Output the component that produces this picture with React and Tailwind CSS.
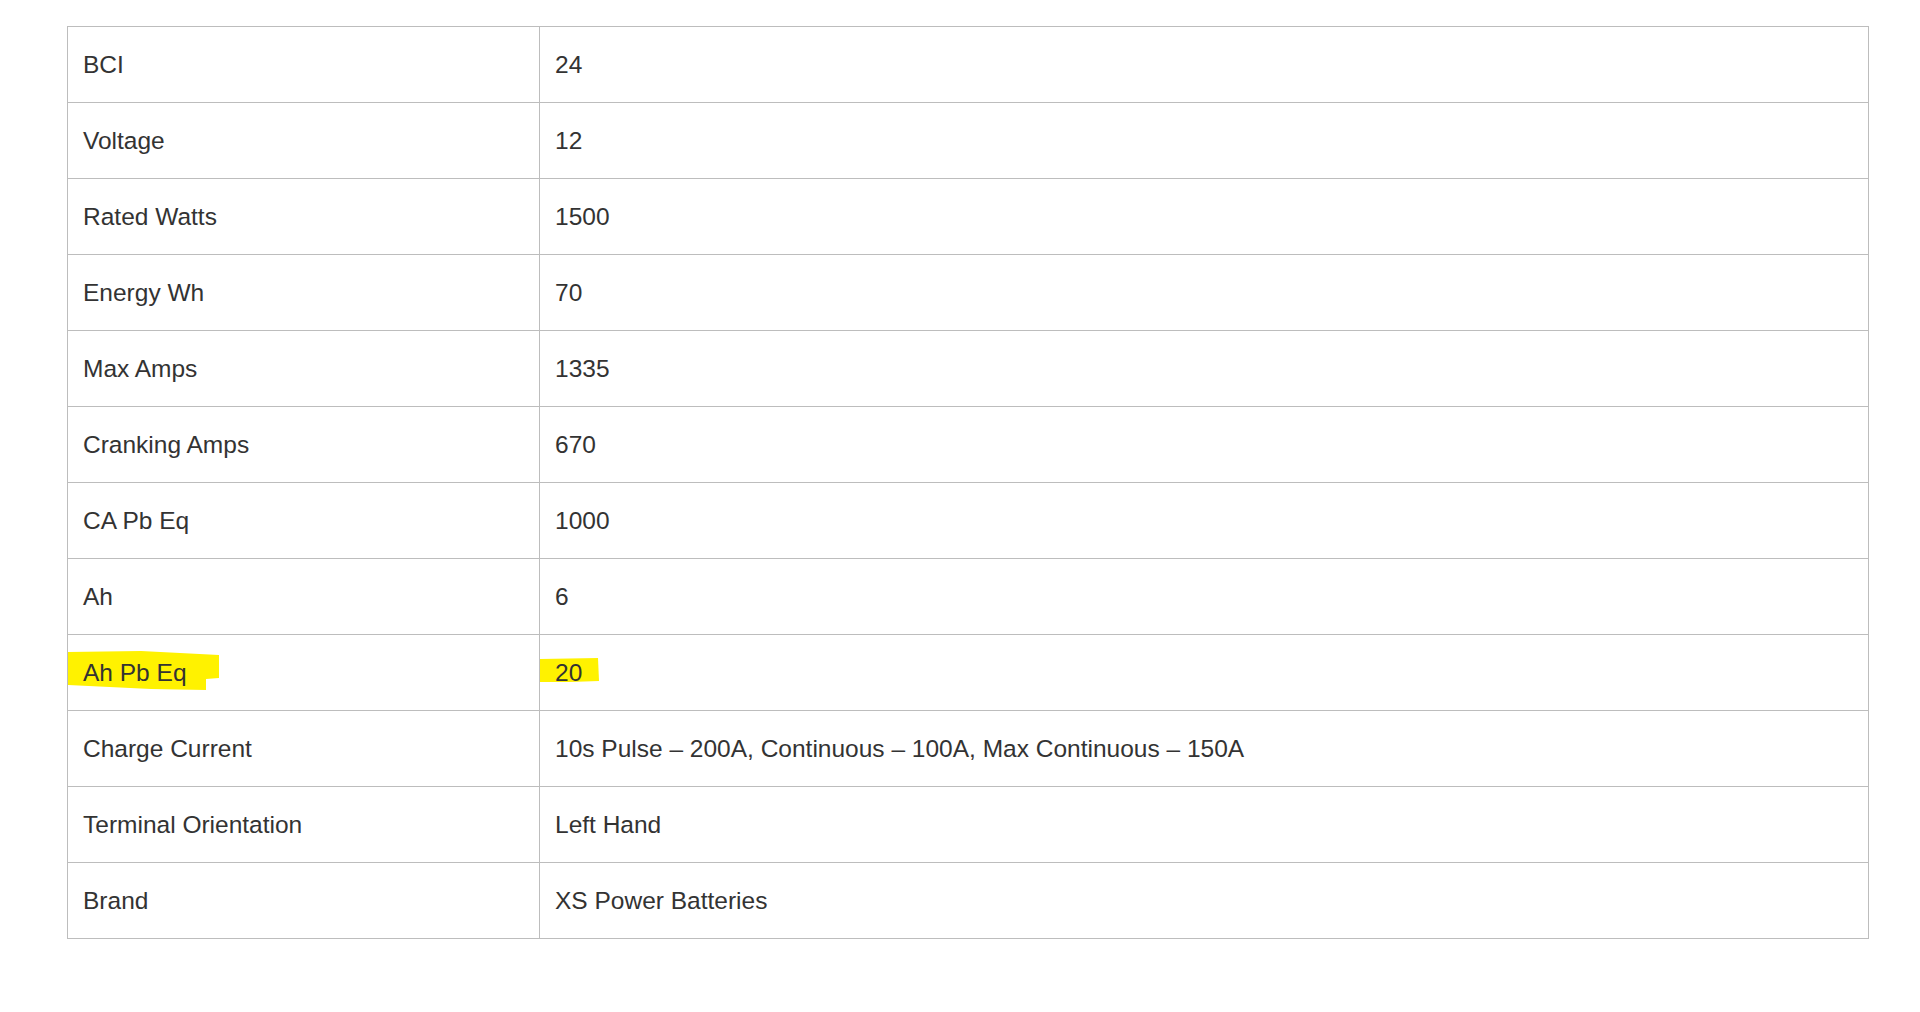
import React from 'react';

const rows = [
  ['BCI', '24'],
  ['Voltage', '12'],
  ['Rated Watts', '1500'],
  ['Energy Wh', '70'],
  ['Max Amps', '1335'],
  ['Cranking Amps', '670'],
  ['CA Pb Eq', '1000'],
  ['Ah', '6'],
  ['Ah Pb Eq', '20', true],
  ['Charge Current', '10s Pulse – 200A, Continuous – 100A, Max Continuous – 150A'],
  ['Terminal Orientation', 'Left Hand'],
  ['Brand', 'XS Power Batteries'],
];

function Marker({ points }) {
  return (
    <svg className="absolute left-0 top-0 w-full h-full pointer-events-none" viewBox="0 0 1329 75" preserveAspectRatio="xMinYMin slice">
      <polygon points={points} fill="#fff200" />
    </svg>
  );
}

export default function App() {
  return (
    <div className="min-h-screen bg-white pt-[26px] pl-[67px] font-['Liberation_Sans',Arial,sans-serif] text-[24.5px] text-[#333333]">
      {/* Spec table */}
      <div className="grid grid-cols-[472px_1329px] w-[1802px] border-l border-t border-[#bdbdbd]">
        {rows.map(([label, value, marked]) => (
          <React.Fragment key={label}>
            <div className="relative h-[76px] border-r border-b border-[#bdbdbd] flex items-center pl-[15px] pt-[2px]">
              {marked && <Marker points="0,17 73,16 151,20 151,43 138,44 138,55 83,54 0,50" />}
              <span className="relative">{label}</span>
            </div>
            <div className="relative h-[76px] border-r border-b border-[#bdbdbd] flex items-center pl-[15px] pt-[2px]">
              {marked && <Marker points="0,24 58,23 59,46 30,47 0,47" />}
              <span className="relative">{value}</span>
            </div>
          </React.Fragment>
        ))}
      </div>
    </div>
  );
}
